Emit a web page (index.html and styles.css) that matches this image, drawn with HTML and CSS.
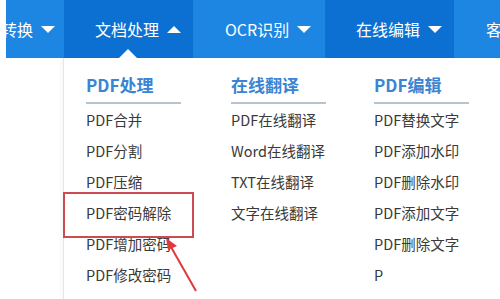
FILE: index.html
```html
<!DOCTYPE html>
<html lang="zh-CN">

<head>
    <meta charset="UTF-8">
    <meta name="viewport" content="width=device-width, initial-scale=1.0">
    <title>文档处理</title>
    <link rel="stylesheet" href="styles.css">
</head>

<body>
    <nav class="nav">
        <div class="nav-item first"><span class="label">转换</span><i class="caret down"></i></div>
        <div class="nav-item active open"><span class="label">文档处理</span><i class="caret up"></i></div>
        <div class="nav-item"><span class="label">OCR识别</span><i class="caret down"></i></div>
        <div class="nav-item active"><span class="label">在线编辑</span><i class="caret down"></i></div>
        <div class="nav-item last"><span class="label">客</span></div>
    </nav>

    <div class="dropdown">
        <div class="menu-col">
            <h2>PDF处理</h2>
            <ul>
                <li>PDF合并</li>
                <li>PDF分割</li>
                <li>PDF压缩</li>
                <li>PDF密码解除</li>
                <li>PDF增加密码</li>
                <li>PDF修改密码</li>
            </ul>
        </div>
        <div class="menu-col">
            <h2>在线翻译</h2>
            <ul>
                <li>PDF在线翻译</li>
                <li>Word在线翻译</li>
                <li>TXT在线翻译</li>
                <li>文字在线翻译</li>
            </ul>
        </div>
        <div class="menu-col">
            <h2>PDF编辑</h2>
            <ul>
                <li>PDF替换文字</li>
                <li>PDF添加水印</li>
                <li>PDF删除水印</li>
                <li>PDF添加文字</li>
                <li>PDF删除文字</li>
                <li>P</li>
            </ul>
        </div>
    </div>

    <!-- annotation marks over the screenshot -->
    <div class="highlight"></div>
    <svg class="arrow" width="60" height="66" viewBox="0 0 60 66">
        <line x1="45" y1="58" x2="20" y2="14" stroke="#e0393c" stroke-width="2" />
        <polygon points="15,5 26,13 17,17" fill="#e0393c" />
    </svg>
    <div class="fade"></div>
</body>

</html>
```

FILE: styles.css
```css
body {
    font-family: "Noto Sans CJK SC", "Noto Sans", sans-serif;
    background: #ffffff;
    margin: 0;
    padding: 0;
    width: 500px;
    height: 299px;
    overflow: hidden;
    position: relative;
}

.nav {
    display: flex;
    height: 58px;
    margin-left: 6px;
    background: #1d86e3;
    color: #ffffff;
    font-size: 16px;
    overflow: hidden;
}

.nav-item {
    position: relative;
    display: flex;
    align-items: center;
    flex: none;
    width: 132px;
    padding-left: 32px;
    box-sizing: border-box;
    white-space: nowrap;
}

.nav-item.first {
    width: 63px;
    padding-left: 0;
    margin-left: -5px;
}

.nav-item.last {
    width: 41px;
}

.nav-item.active {
    width: 129px;
    padding-left: 31px;
    background: #0c6fd2;
}

.caret {
    margin-left: 8px;
    width: 0;
    height: 0;
    border-left: 7px solid transparent;
    border-right: 7px solid transparent;
}

.caret.down {
    border-top: 7px solid #ffffff;
}

.caret.up {
    border-bottom: 7px solid #ffffff;
}

.nav-item.open::after {
    content: "";
    position: absolute;
    left: 55px;
    bottom: 0;
    border-left: 9px solid transparent;
    border-right: 9px solid transparent;
    border-bottom: 9px solid #ffffff;
}

.dropdown {
    display: grid;
    grid-template-columns: 145px 143px 1fr;
    margin-left: 63px;
    padding: 15px 0 0 22px;
    height: 241px;
    box-sizing: border-box;
    border-left: 1px solid #e4e6ea;
    box-shadow: -2px 0 4px rgba(0, 0, 0, 0.04);
}

.menu-col h2 {
    margin: 0;
    width: 95px;
    padding-bottom: 5px;
    border-bottom: 2px solid #b7c3d1;
    font-size: 17px;
    line-height: 24px;
    font-weight: 700;
    color: #3a85d3;
}

.menu-col ul {
    list-style: none;
    margin: 0;
    padding: 0;
}

.menu-col li {
    font-size: 14.5px;
    line-height: 31px;
    color: #3a3a3a;
}

.highlight {
    position: absolute;
    left: 63px;
    top: 192px;
    width: 127px;
    height: 42px;
    border: 2px solid #cb4b50;
}

.arrow {
    position: absolute;
    left: 151px;
    top: 233px;
}

.fade {
    position: absolute;
    right: 0;
    bottom: 0;
    width: 118px;
    height: 44px;
    background: linear-gradient(to right, rgba(255, 255, 255, 0) 0, #ffffff 14px);
}
```
